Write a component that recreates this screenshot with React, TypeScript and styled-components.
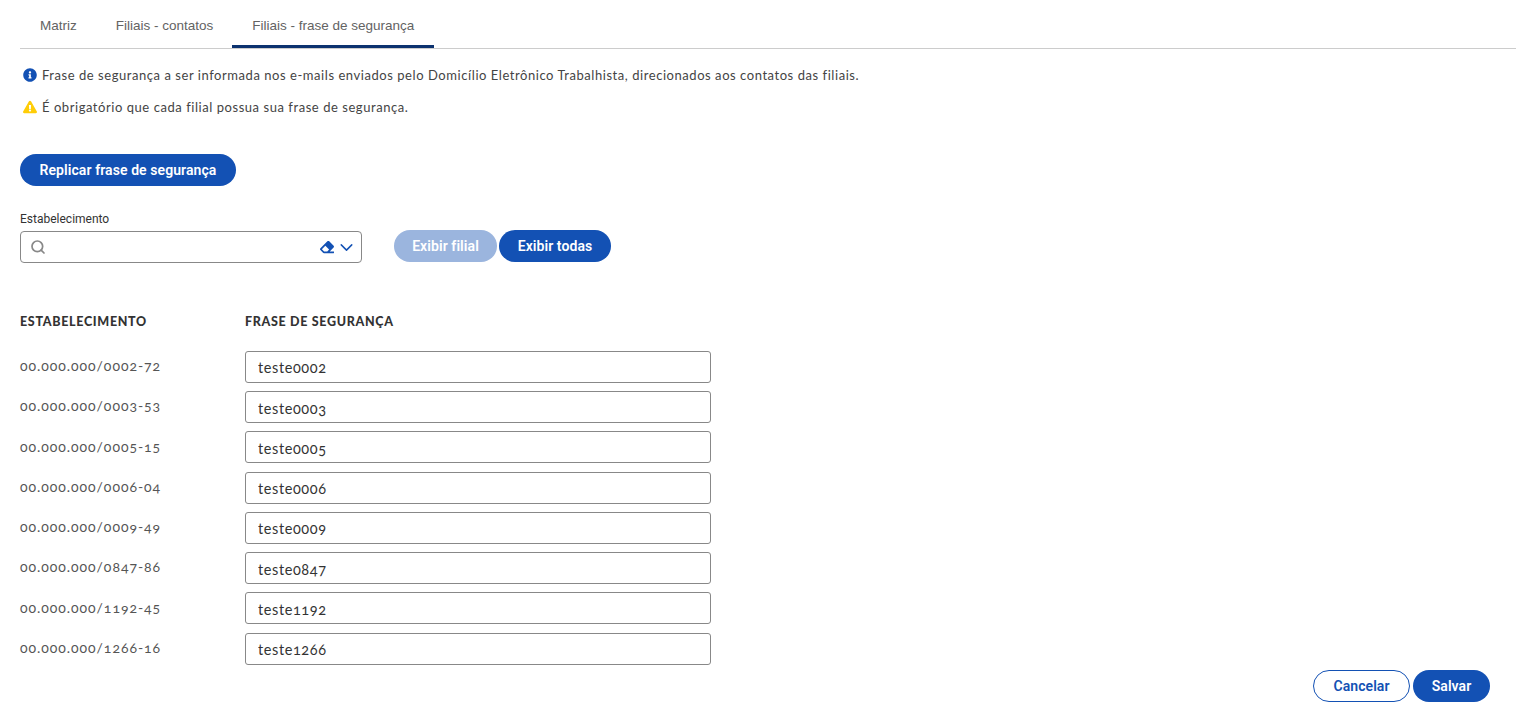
import React from "react";
import styled, { createGlobalStyle } from "styled-components";
import { FaInfoCircle, FaExclamationTriangle, FaEraser } from "react-icons/fa";
import { ChevronDown, Search } from "lucide-react";

const Global = createGlobalStyle`
  html, body { margin: 0; padding: 0; background: #fff; }
  body { font-family: "Lato", "Liberation Sans", sans-serif; color: #333; }
`;

const Page = styled.div`
  display: flex;
  flex-direction: column;
  height: 718px;
  padding: 0 20px;
  box-sizing: border-box;
  overflow: hidden;
`;

const Tabs = styled.div`
  display: flex;
  height: 49px;
  box-sizing: border-box;
  border-bottom: 1px solid #ccc;
`;

const Tab = styled.div<{ $active?: boolean }>`
  height: 48px;
  box-sizing: border-box;
  padding: 17px ${(p) => (p.$active ? 20 : 19)}px 0 20px;
  font: 13.5px/17px "Liberation Sans", Arial, sans-serif;
  color: #636363;
  border-bottom: 3px solid ${(p) => (p.$active ? "#0c326f" : "transparent")};
  margin-bottom: -1px;
`;

const Notices = styled.div`
  margin-top: 10px;
  display: flex;
  flex-direction: column;
`;

const Notice = styled.div`
  display: flex;
  align-items: center;
  gap: 5px;
  height: 32px;
  padding-left: 3px;
  font-size: 13px;
  letter-spacing: 0.55px;
  color: #444;
`;

const Button = styled.button<{ $variant?: "primary" | "disabled" | "outline"; $w: number }>`
  width: ${(p) => p.$w}px;
  height: 32px;
  box-sizing: border-box;
  padding: 0;
  border-radius: 16px;
  font: 600 14px/16px "Roboto", sans-serif;
  letter-spacing: 0.08px;
  border: ${(p) => (p.$variant === "outline" ? "1px solid #1351b4" : "none")};
  color: ${(p) => (p.$variant === "outline" ? "#1351b4" : "#fff")};
  background: ${(p) =>
    p.$variant === "outline" ? "#fff" : p.$variant === "disabled" ? "#9bb5de" : "#1351b4"};
`;

const ReplicateRow = styled.div`
  margin-top: 31px;
  display: flex;
`;

const FilterRow = styled.div`
  margin-top: 24px;
  display: flex;
  align-items: flex-end;
`;

const Field = styled.div`
  display: flex;
  flex-direction: column;
  width: 342px;
  margin-right: 32px;
`;

const FieldLabel = styled.label`
  font: 12px/14px "Roboto", sans-serif;
  color: #333;
  margin-bottom: 5px;
  padding-top: 2px;
`;

const SelectBox = styled.div`
  height: 32px;
  box-sizing: border-box;
  border: 1px solid #888;
  border-radius: 4px;
  display: flex;
  align-items: center;
  padding: 0 4px 0 9px;
  color: #1351b4;
  margin-bottom: -1px;
`;

const SelectSpacer = styled.div`
  flex: 1;
`;

const EraserWrap = styled.span`
  display: flex;
  margin-right: 2px;
`;

const ButtonGroup = styled.div`
  display: flex;
  gap: 2px;
`;

const TableHead = styled.div`
  display: grid;
  grid-template-columns: 225px 466px;
  margin-top: 51px;
  height: 37.9px;
`;

const HeadCell = styled.div`
  font-size: 12.5px;
  font-weight: 900;
  letter-spacing: 0.68px;
  line-height: 18px;
  color: #333;
`;

const TableBody = styled.div`
  display: grid;
  grid-template-columns: 225px 466px;
  grid-auto-rows: 40.25px;
`;

const RowLabel = styled.div`
  font-size: 14px;
  font-variant-numeric: oldstyle-nums;
  letter-spacing: 0.95px;
  line-height: 16px;
  padding-top: 7.2px;
  color: #555;
`;

const RowInput = styled.input`
  width: 466px;
  height: 32px;
  box-sizing: border-box;
  border: 1px solid #888;
  border-radius: 3px;
  padding: 2px 12px 0;
  font: 14.5px "Lato", sans-serif;
  font-variant-numeric: oldstyle-nums;
  letter-spacing: 0.6px;
  color: #333;
  outline: none;
`;

const Actions = styled.div`
  position: absolute;
  top: 670px;
  right: 46px;
  display: flex;
  gap: 3px;
`;

const rows = [
  ["00.000.000/0002-72", "teste0002"],
  ["00.000.000/0003-53", "teste0003"],
  ["00.000.000/0005-15", "teste0005"],
  ["00.000.000/0006-04", "teste0006"],
  ["00.000.000/0009-49", "teste0009"],
  ["00.000.000/0847-86", "teste0847"],
  ["00.000.000/1192-45", "teste1192"],
  ["00.000.000/1266-16", "teste1266"],
];

export default function App() {
  return (
    <Page>
      <Global />
      <Tabs>
        <Tab>Matriz</Tab>
        <Tab>Filiais - contatos</Tab>
        <Tab $active>Filiais - frase de segurança</Tab>
      </Tabs>
      <Notices>
        <Notice>
          <FaInfoCircle size={14} color="#1351b4" />
          Frase de segurança a ser informada nos e-mails enviados pelo Domicílio Eletrônico Trabalhista, direcionados aos contatos das filiais.
        </Notice>
        <Notice>
          <FaExclamationTriangle size={14} color="#ffcd07" />
          É obrigatório que cada filial possua sua frase de segurança.
        </Notice>
      </Notices>
      <ReplicateRow>
        <Button $w={216}>Replicar frase de segurança</Button>
      </ReplicateRow>
      <FilterRow>
        <Field>
          <FieldLabel>Estabelecimento</FieldLabel>
          <SelectBox>
            <Search size={16} color="#888" strokeWidth={2.6} />
            <SelectSpacer />
            <EraserWrap><FaEraser size={14} color="#1351b4" /></EraserWrap>
            <ChevronDown size={21} strokeWidth={1.7} />
          </SelectBox>
        </Field>
        <ButtonGroup>
          <Button $w={103} $variant="disabled">Exibir filial</Button>
          <Button $w={112}>Exibir todas</Button>
        </ButtonGroup>
      </FilterRow>
      <TableHead>
        <HeadCell>ESTABELECIMENTO</HeadCell>
        <HeadCell>FRASE DE SEGURANÇA</HeadCell>
      </TableHead>
      <TableBody>
        {rows.map(([cnpj, phrase]) => (
          <React.Fragment key={cnpj}>
            <RowLabel>{cnpj}</RowLabel>
            <RowInput defaultValue={phrase} />
          </React.Fragment>
        ))}
      </TableBody>
      <Actions>
        <Button $w={97} $variant="outline">Cancelar</Button>
        <Button $w={77}>Salvar</Button>
      </Actions>
    </Page>
  );
}
